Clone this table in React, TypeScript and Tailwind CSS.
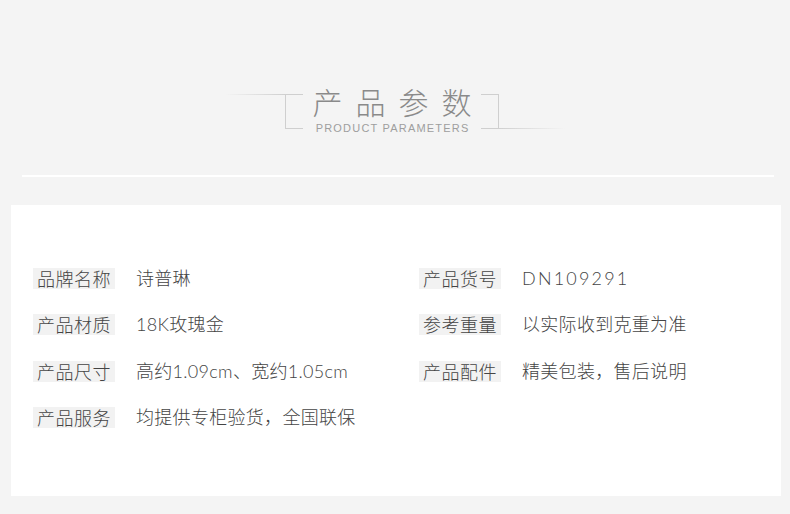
const rows: [string, string, string, string][] = [
  ["品牌名称", "诗普琳", "产品货号", "DN109291"],
  ["产品材质", "18K玫瑰金", "参考重量", "以实际收到克重为准"],
  ["产品尺寸", "高约1.09cm、宽约1.05cm", "产品配件", "精美包装，售后说明"],
  ["产品服务", "均提供专柜验货，全国联保", "", ""],
];

const cjk = "font-['Noto_Sans_CJK_SC',sans-serif]";

function Field({ label, value, wide }: { label: string; value: string; wide?: boolean }) {
  if (!label) return <div />;
  return (
    <div className="flex items-center h-[20px]">
      <span className="bg-[#f2f2f2] px-[4px] h-[21px] leading-[21px] text-[18px] tracking-[0.5px] text-[#444] font-light">
        {label}
      </span>
      <span
        className={
          "ml-[21px] font-['Lato','Noto_Sans_CJK_SC',sans-serif] font-light text-[18px] leading-[21px] text-[#444] whitespace-nowrap " +
          (wide ? "tracking-[2.2px]" : "tracking-[0.3px]")
        }
      >
        {value}
      </span>
    </div>
  );
}

export default function App() {
  return (
    <div className={"w-[790px] h-[514px] bg-[#f4f4f4] overflow-hidden " + cjk}>
      {/* header */}
      <div className="pt-[81px] flex justify-center items-start">
        <div className="mt-[13px] w-[60px] h-px bg-gradient-to-r from-transparent to-[#cfcfcf]" />
        <div className="mt-[13px] w-[18px] h-[35px] border-l border-t border-b border-[#cfcfcf]" />
        <div className="w-[178px] flex flex-col items-center">
          <div className="flex gap-[13px] text-[30px] leading-[40px] text-[#8a8a8a] font-light whitespace-nowrap">
            <span>产</span>
            <span>品</span>
            <span>参</span>
            <span>数</span>
          </div>
          <div className="font-['Liberation_Sans',sans-serif] text-[11px] leading-[14px] tracking-[1.2px] pl-[1.2px] text-[#9e9e9e] whitespace-nowrap">
            PRODUCT PARAMETERS
          </div>
        </div>
        <div className="mt-[13px] w-[18px] h-[35px] border-r border-t border-b border-[#cfcfcf]" />
        <div className="mt-[47px] w-[66px] h-px bg-gradient-to-r from-[#cfcfcf] to-transparent" />
      </div>

      <div className="mt-[40px] mx-[22px] w-[752px] h-[2px] bg-white" />

      {/* params card */}
      <div className="mt-[28px] ml-[11px] w-[770px] h-[291px] bg-white pt-[63px] pl-[22px]">
        <div className="flex flex-col gap-[26.5px]">
          {rows.map(([l1, v1, l2, v2]) => (
            <div key={l1} className="grid grid-cols-[386px_1fr]">
              <Field label={l1} value={v1} />
              <Field label={l2} value={v2} wide={v2 === "DN109291"} />
            </div>
          ))}
        </div>
      </div>
    </div>
  );
}
